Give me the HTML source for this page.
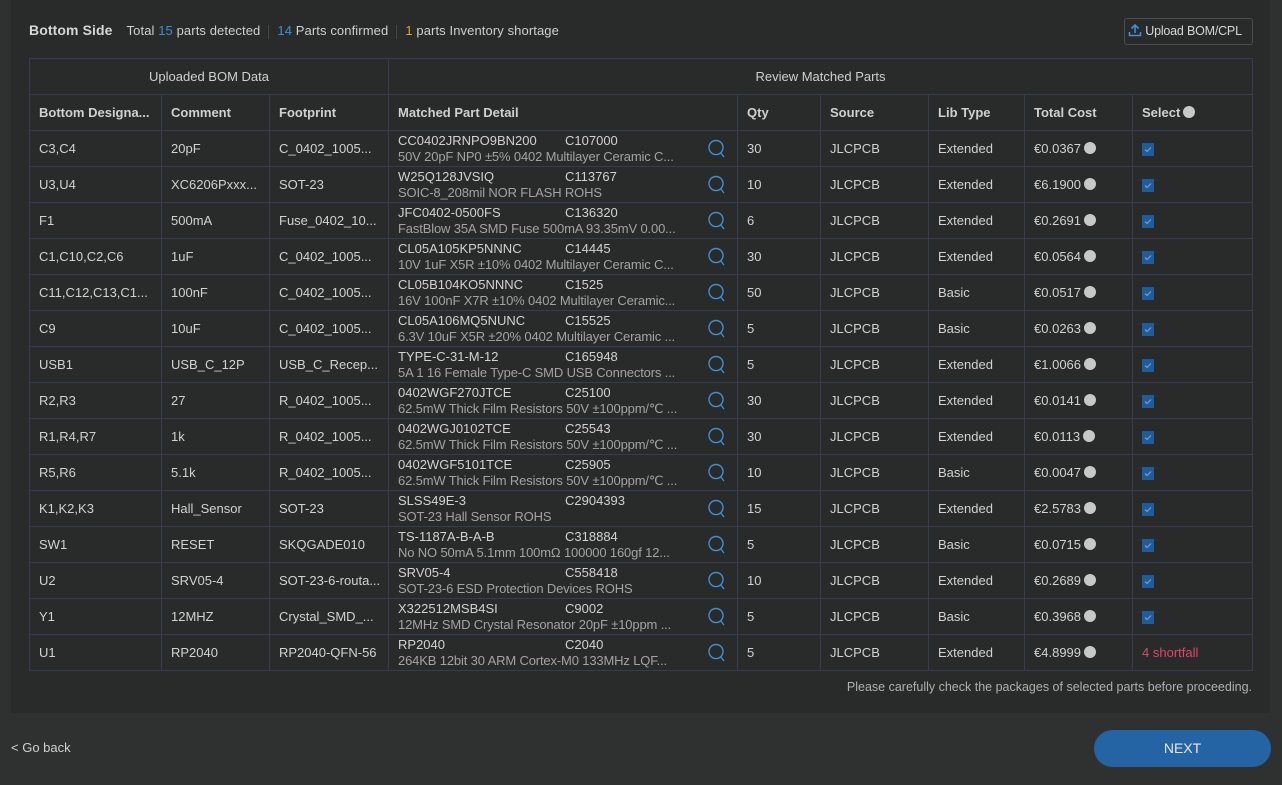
<!DOCTYPE html><html><head><style>
*{margin:0;padding:0;box-sizing:border-box}
body{width:1282px;height:785px;background:#2f3030;font-family:"Liberation Sans",sans-serif;font-size:13px;color:#d2d2d2;position:relative;overflow:hidden}
.panel{position:absolute;left:11px;top:0;width:1259px;height:713px;background:#292a2a}
.hdr{position:absolute;left:18px;top:22px;white-space:nowrap;color:#cfcfcf;letter-spacing:0.1px}
.hdr b{font-size:14px;margin-right:14px;color:#d6d6d6}
.blue{color:#3d8fd6}.org{color:#e0a030}
.sep{display:inline-block;width:1px;height:14px;background:#444;vertical-align:middle;margin:0 8px}
.up{position:absolute;left:1113px;top:18px;width:129px;height:27px;border:1px solid #4a4c4e;border-radius:3px;font-size:12.5px;line-height:25px;padding-left:3px;color:#d6d6d6;white-space:nowrap;letter-spacing:-0.2px}
table{position:absolute;left:18px;top:58px;border-collapse:collapse;table-layout:fixed;width:1223px}
td,th{border:1px solid #363c52;height:36px;padding:0 9px;text-align:left;white-space:nowrap;overflow:hidden;font-weight:normal}
th{font-weight:bold;color:#d0d0d0}
.g th{text-align:center;font-weight:normal}
.d{position:relative;line-height:16px;padding-top:1px}
.d span{display:inline-block;width:167px}
.d .s{color:#a3a3a3;display:block;width:290px;overflow:hidden;text-overflow:ellipsis;letter-spacing:-0.15px}
.q{position:absolute;right:10px;top:8px}
.i{display:inline-block;width:12px;height:12px;border-radius:50%;background:#c8c8c8;vertical-align:-1px;margin-left:3px}
.cb{display:inline-block;width:12px;height:13px;background:#1f5c9e;vertical-align:middle}
.red{color:#e0456e}
.note{position:absolute;right:18px;top:680px;color:#b0b0b0;font-size:12.5px}
.back{position:absolute;left:11px;top:740px;color:#d0d0d0}
.next{position:absolute;left:1094px;top:730px;width:177px;height:37px;border-radius:19px;background:#2463a4;color:#e8e8e8;text-align:center;line-height:37px;font-size:14px}
</style></head><body>
<div class="panel">
<div class="hdr"><b>Bottom Side</b>Total <span class="blue">15</span> parts detected<span class="sep"></span><span class="blue">14</span> Parts confirmed<span class="sep"></span><span class="org">1</span> parts Inventory shortage</div>
<div class="up"><svg width="14" height="14" viewBox="0 0 14 14" style="vertical-align:-2px"><path d="M7 10V2M3.5 5.5L7 2l3.5 3.5M1.5 9v3.5h11V9" stroke="#3d8fd6" stroke-width="1.6" fill="none"/></svg> Upload BOM/CPL</div>
<table>
<colgroup><col width="132"><col width="108"><col width="119"><col width="349"><col width="83"><col width="108"><col width="96"><col width="108"><col width="120"></colgroup>
<tr class="g"><th colspan="3">Uploaded BOM Data</th><th colspan="6">Review Matched Parts</th></tr>
<tr><th>Bottom Designa...</th><th>Comment</th><th>Footprint</th><th>Matched Part Detail</th><th>Qty</th><th>Source</th><th>Lib Type</th><th>Total Cost</th><th>Select<span class="i"></span></th></tr>
<tbody id="tb"></tbody>
</table>
<div class="note">Please carefully check the packages of selected parts before proceeding.</div>
</div>
<div class="back">&lt; Go back</div>
<div class="next">NEXT</div>
<script>
var r=[["C3,C4","20pF","C_0402_1005...","CC0402JRNPO9BN200","C107000","50V 20pF NP0 ±5% 0402 Multilayer Ceramic C...","30","Extended","0.0367"],
["U3,U4","XC6206Pxxx...","SOT-23","W25Q128JVSIQ","C113767","SOIC-8_208mil NOR FLASH ROHS","10","Extended","6.1900"],
["F1","500mA","Fuse_0402_10...","JFC0402-0500FS","C136320","FastBlow 35A SMD Fuse 500mA 93.35mV 0.00...","6","Extended","0.2691"],
["C1,C10,C2,C6","1uF","C_0402_1005...","CL05A105KP5NNNC","C14445","10V 1uF X5R ±10% 0402 Multilayer Ceramic C...","30","Extended","0.0564"],
["C11,C12,C13,C1...","100nF","C_0402_1005...","CL05B104KO5NNNC","C1525","16V 100nF X7R ±10% 0402 Multilayer Ceramic...","50","Basic","0.0517"],
["C9","10uF","C_0402_1005...","CL05A106MQ5NUNC","C15525","6.3V 10uF X5R ±20% 0402 Multilayer Ceramic ...","5","Basic","0.0263"],
["USB1","USB_C_12P","USB_C_Recep...","TYPE-C-31-M-12","C165948","5A 1 16 Female Type-C SMD USB Connectors ...","5","Extended","1.0066"],
["R2,R3","27","R_0402_1005...","0402WGF270JTCE","C25100","62.5mW Thick Film Resistors 50V ±100ppm/℃ ...","30","Extended","0.0141"],
["R1,R4,R7","1k","R_0402_1005...","0402WGJ0102TCE","C25543","62.5mW Thick Film Resistors 50V ±100ppm/℃ ...","30","Extended","0.0113"],
["R5,R6","5.1k","R_0402_1005...","0402WGF5101TCE","C25905","62.5mW Thick Film Resistors 50V ±100ppm/℃ ...","10","Basic","0.0047"],
["K1,K2,K3","Hall_Sensor","SOT-23","SLSS49E-3","C2904393","SOT-23 Hall Sensor ROHS","15","Extended","2.5783"],
["SW1","RESET","SKQGADE010","TS-1187A-B-A-B","C318884","No NO 50mA 5.1mm 100mΩ 100000 160gf 12...","5","Basic","0.0715"],
["U2","SRV05-4","SOT-23-6-routa...","SRV05-4","C558418","SOT-23-6 ESD Protection Devices ROHS","10","Extended","0.2689"],
["Y1","12MHZ","Crystal_SMD_...","X322512MSB4SI","C9002","12MHz SMD Crystal Resonator 20pF ±10ppm ...","5","Basic","0.3968"],
["U1","RP2040","RP2040-QFN-56","RP2040","C2040","264KB 12bit 30 ARM Cortex-M0 133MHz LQF...","5","Extended","4.8999"]];
var q='<svg class="q" width="20" height="20" viewBox="0 0 20 20"><circle cx="9" cy="8.5" r="7" stroke="#3d8fd6" stroke-width="1.4" fill="none"/><path d="M13.5 13.5L17 18" stroke="#3d8fd6" stroke-width="1.4"/></svg>';
var cb='<svg width="12" height="13" viewBox="0 0 12 13" style="vertical-align:middle"><rect width="12" height="13" fill="#1f5c9e"/><path d="M3 6.5l2 2 4-4" stroke="#7fa6cf" stroke-width="1" fill="none"/></svg>';
var h='';r.forEach(function(x,i){h+='<tr><td>'+x[0]+'</td><td>'+x[1]+'</td><td>'+x[2]+'</td><td class="d"><span>'+x[3]+'</span>'+x[4]+'<div class="s">'+x[5]+'</div>'+q+'</td><td>'+x[6]+'</td><td>JLCPCB</td><td>'+x[7]+'</td><td>€'+x[8]+'<span class="i"></span></td><td>'+(i==14?'<span class="red">4 shortfall</span>':cb)+'</td></tr>'});
document.getElementById('tb').innerHTML=h;
</script>
</body></html>
